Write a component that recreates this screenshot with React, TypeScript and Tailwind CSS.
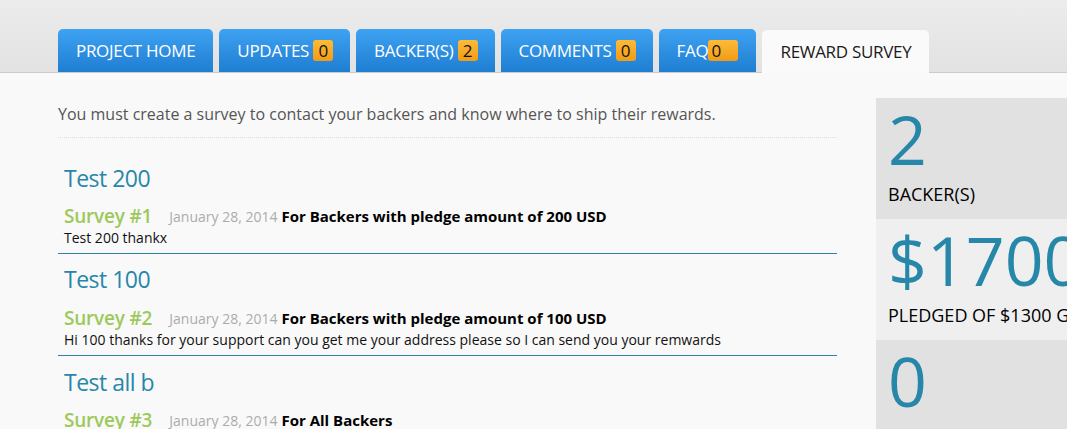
import React from 'react';

const font = { fontFamily: '"Open Sans", "Noto Sans", sans-serif' };

function Badge({ n, wide }: { n: string; wide?: boolean }) {
  return (
    <span
      className={`inline-flex items-center h-[21px] rounded-[3px] bg-gradient-to-b from-[#fdbb36] to-[#f29b14] text-[#111] text-[17px] leading-none ${
        wide ? 'w-[30px] pl-[3px] ml-0' : 'w-[20px] justify-center ml-[4px]'
      }`}
    >
      {n}
    </span>
  );
}

function Tab({ label, badge, wide }: { label: string; badge?: string; wide?: boolean }) {
  return (
    <div
      className={`h-[43px] flex items-center pl-[18px] ${
        badge && !wide ? 'pr-[17px]' : 'pr-[18px]'
      } rounded-t-[5px] bg-gradient-to-b from-[#3ea2f2] to-[#1e7ed2] text-white text-[17px] tracking-[-0.3px] whitespace-nowrap`}
    >
      <span>{label}</span>
      {badge && <Badge n={badge} wide={wide} />}
    </div>
  );
}

function Survey({
  title,
  num,
  who,
  desc,
  gap,
  last,
}: {
  title: string;
  num: string;
  who: string;
  desc?: string;
  gap: string;
  last?: boolean;
}) {
  return (
    <div className={`px-[6px] ${last ? '' : 'border-b border-[#2b84a2] pb-[6px]'}`}>
      <div className="h-[30px] flex items-center text-[23px] text-[#2787a8] tracking-[-0.5px]">{title}</div>
      <div className={`${gap} h-[22px] flex items-center whitespace-nowrap`}>
        <span className="text-[19px] font-semibold text-[#9dc95c] tracking-[-0.2px]">Survey #{num}</span>
        <span className="ml-[17px] text-[14px] text-[#acacac]">January 28, 2014</span>
        <span className="ml-[4px] text-[15px] font-bold text-black">{who}</span>
      </div>
      {desc && <div className="h-[20px] flex items-center text-[14px] text-[#111]">{desc}</div>}
    </div>
  );
}

function Stat({ value, label, light }: { value: string; label: string; light?: boolean }) {
  return (
    <div className={`h-[121px] pl-[12px] pt-[5px] overflow-hidden whitespace-nowrap ${light ? 'bg-[#efefef]' : 'bg-[#e1e1e1]'}`}>
      <div className="h-[72px] flex items-center text-[68px] text-[#2787a8] leading-none">{value}</div>
      <div className="mt-[6px] text-[18px] text-black">{label}</div>
    </div>
  );
}

export default function App() {
  return (
    <div className="w-[1067px] h-[429px] overflow-hidden bg-[#f9f9f9]" style={font}>
      {/* Tabs */}
      <div className="h-[73px] bg-gradient-to-b from-[#ececec] to-[#e2e2e2] border-b border-[#cbcbcb] flex items-end pl-[58px] gap-[6px]">
        <Tab label="PROJECT HOME" />
        <Tab label="UPDATES" badge="0" />
        <Tab label="BACKER(S)" badge="2" />
        <Tab label="COMMENTS" badge="0" />
        <Tab label="FAQ" badge="0" wide />
        <div className="h-[43px] -mb-px flex items-center px-[18px] rounded-t-[5px] bg-[#fafafa] text-[#1a1a1a] text-[17px] tracking-[-0.3px] whitespace-nowrap">
          REWARD SURVEY
        </div>
      </div>

      <div className="flex">
        {/* Main column */}
        <div className="ml-[58px] w-[779px] shrink-0">
          <div className="pt-[30px] pb-[12px] border-b border-dotted border-[#dcdcdc] text-[16px] text-[#555] leading-[22px] whitespace-nowrap">
            You must create a survey to contact your backers and know where to ship their rewards.
          </div>
          <div className="pt-[25px]">
            <Survey
              title="Test 200"
              num="1"
              gap="mt-[12px]"
              who="For Backers with pledge amount of 200 USD"
              desc="Test 200 thankx"
            />
          </div>
          <div className="pt-[10px]">
            <Survey
              title="Test 100"
              num="2"
              gap="mt-[13px]"
              who="For Backers with pledge amount of 100 USD"
              desc="Hi 100 thanks for your support can you get me your address please so I can send you your remwards"
            />
          </div>
          <div className="pt-[11px]">
            <Survey title="Test all b" num="3" gap="mt-[12px]" who="For All Backers" last />
          </div>
        </div>

        {/* Stats */}
        <div className="ml-[39px] mt-[25px] flex-1 min-w-0">
          <Stat value="2" label="BACKER(S)" />
          <Stat value="$1700" label="PLEDGED OF $1300 GOAL" light />
          <Stat value="0" label="HOUR(S) TO GO" />
        </div>
      </div>
    </div>
  );
}
